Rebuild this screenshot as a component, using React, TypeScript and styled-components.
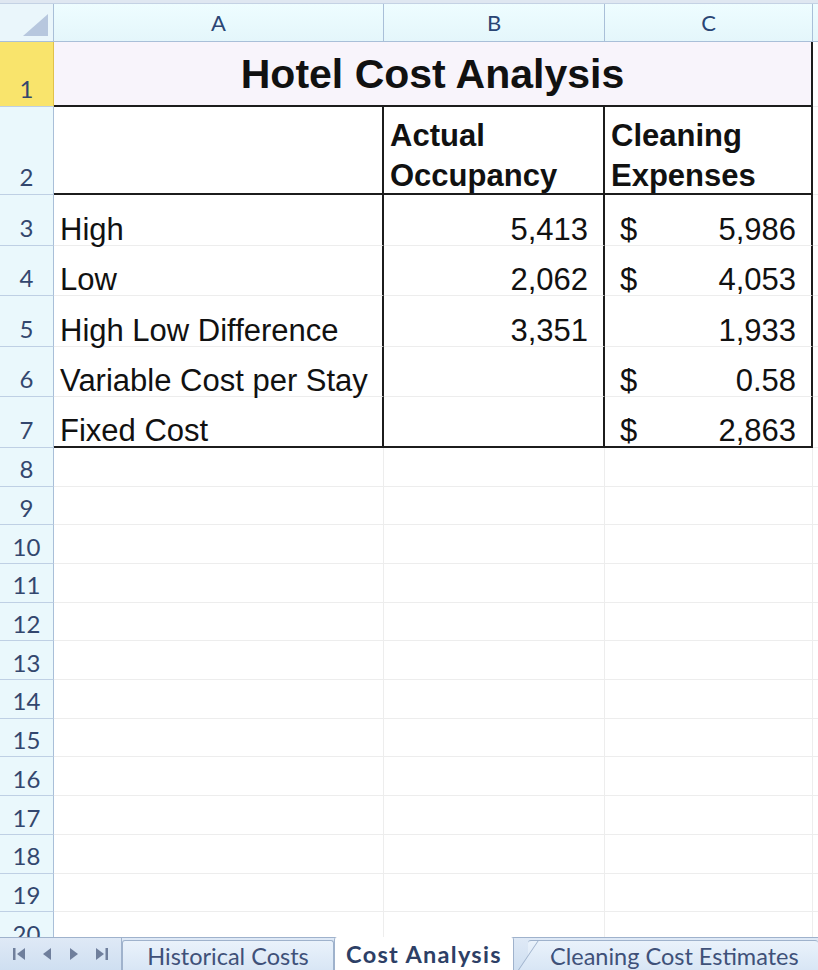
import React from "react";
import styled, { createGlobalStyle } from "styled-components";

const GlobalStyle = createGlobalStyle`
  html, body {
    margin: 0;
    padding: 0;
    background: #ffffff;
    overflow: hidden;
  }
`;

const rowsTop = [
  { n: 1, h: 65 },
  { n: 2, h: 88 },
  { n: 3, h: 50.6 },
  { n: 4, h: 50.6 },
  { n: 5, h: 50.6 },
  { n: 6, h: 50.6 },
  { n: 7, h: 50.6 },
];
const emptyRows = [8, 9, 10, 11, 12, 13, 14, 15, 16, 17, 18, 19, 20];

type Money = { sign?: boolean; value: string };
type DataRow = { n: number; label: string; occ: string; cost: Money | null };

const data: DataRow[] = [
  { n: 3, label: "High", occ: "5,413", cost: { sign: true, value: "5,986" } },
  { n: 4, label: "Low", occ: "2,062", cost: { sign: true, value: "4,053" } },
  { n: 5, label: "High Low Difference", occ: "3,351", cost: { value: "1,933" } },
  { n: 6, label: "Variable Cost per Stay", occ: "", cost: { sign: true, value: "0.58" } },
  { n: 7, label: "Fixed Cost", occ: "", cost: { sign: true, value: "2,863" } },
];

export default function App() {
  return (
    <Window>
      <GlobalStyle />
      <TopStrip />
      <SheetArea>
        <Grid>
          <Corner>
            <svg width="30" height="26" viewBox="0 0 30 26">
              <polygon points="28,2 28,24 3,24" fill="#b7c7de" />
            </svg>
          </Corner>
          <ColHead>A</ColHead>
          <ColHead>B</ColHead>
          <ColHead>C</ColHead>
          <ColHead />

          <RowHead $active>1</RowHead>
          <TitleCell $right $bottom>Hotel Cost Analysis</TitleCell>
          <Cell />

          <RowHead>2</RowHead>
          <Cell $right $bottom />
          <HeadCell $right $bottom>
            Actual
            <br />
            Occupancy
          </HeadCell>
          <HeadCell $right $bottom>
            Cleaning
            <br />
            Expenses
          </HeadCell>
          <Cell />

          {data.map((r) => (
            <React.Fragment key={r.n}>
              <RowHead>{r.n}</RowHead>
              <Cell $right $bottom={r.n === 7}>
                {r.label}
              </Cell>
              <Cell $right $bottom={r.n === 7} $align="flex-end">
                {r.occ}
              </Cell>
              <Cell $right $bottom={r.n === 7} $split>
                {r.cost && (
                  <>
                    <span>{r.cost.sign ? "$" : ""}</span>
                    <span>{r.cost.value}</span>
                  </>
                )}
              </Cell>
              <Cell />
            </React.Fragment>
          ))}

          {emptyRows.map((n) => (
            <React.Fragment key={n}>
              <RowHead $small>{n}</RowHead>
              <Cell />
              <Cell />
              <Cell />
              <Cell />
            </React.Fragment>
          ))}
        </Grid>
      </SheetArea>

      <TabBar>
        <NavGroup>
          <NavButton>
            <svg width="14" height="18" viewBox="0 0 14 18">
              <rect x="1" y="3" width="2.5" height="12" fill="#6f7f9c" />
              <polygon points="13,3 13,15 5,9" fill="#6f7f9c" />
            </svg>
          </NavButton>
          <NavButton>
            <svg width="12" height="18" viewBox="0 0 12 18">
              <polygon points="10,3 10,15 2,9" fill="#6f7f9c" />
            </svg>
          </NavButton>
          <NavButton>
            <svg width="12" height="18" viewBox="0 0 12 18">
              <polygon points="2,3 2,15 10,9" fill="#6f7f9c" />
            </svg>
          </NavButton>
          <NavButton>
            <svg width="14" height="18" viewBox="0 0 14 18">
              <polygon points="1,3 1,15 9,9" fill="#6f7f9c" />
              <rect x="10.5" y="3" width="2.5" height="12" fill="#6f7f9c" />
            </svg>
          </NavButton>
        </NavGroup>
        <Tab $w={212}>Historical Costs</Tab>
        <Tab $active $w={180}>
          Cost Analysis
        </Tab>
        <Tab $slant>Cleaning Cost Estimates</Tab>
      </TabBar>
    </Window>
  );
}

const Window = styled.div`
  width: 818px;
  height: 970px;
  display: flex;
  flex-direction: column;
  background: #ffffff;
  overflow: hidden;
`;

const TopStrip = styled.div`
  height: 4px;
  flex: none;
  background: #dfe7f1;
  border-bottom: 1px solid #c4d2e4;
  box-sizing: border-box;
`;

const SheetArea = styled.div`
  flex: 1;
  overflow: hidden;
`;

const Grid = styled.div`
  display: grid;
  grid-template-columns: 54px 330px 221px 208px 1fr;
  grid-template-rows: 38px ${rowsTop.map((r) => `${r.h}px`).join(" ")} repeat(
      ${emptyRows.length},
      38.7px
    );
`;

const headFont = `Lato, "Open Sans", sans-serif`;
const cellFont = `"Liberation Sans", Arial, sans-serif`;

const Corner = styled.div`
  background: #eaf6fb;
  border-right: 1px solid #a9bfd8;
  border-bottom: 1px solid #a9bfd8;
  display: flex;
  align-items: flex-end;
  justify-content: flex-end;
  padding: 0 3px 3px 0;
`;

const ColHead = styled.div`
  background: linear-gradient(#eefdff, #e4f6fb);
  border-right: 1px solid #a9bfd8;
  border-bottom: 1px solid #a9bfd8;
  display: flex;
  align-items: center;
  justify-content: center;
  font-family: ${headFont};
  font-size: 22px;
  color: #2a4574;
`;

const RowHead = styled.div<{ $active?: boolean; $small?: boolean }>`
  background: ${(p) => (p.$active ? "#f9e46c" : "#eaf8fc")};
  border-right: 1px solid ${(p) => (p.$active ? "#e1c14a" : "#a9bfd8")};
  border-bottom: 1px solid #bfd0e4;
  display: flex;
  align-items: ${(p) => (p.$small ? "center" : "flex-end")};
  justify-content: center;
  padding: ${(p) => (p.$small ? "4px 0 0" : "0 0 3px")};
  box-sizing: border-box;
  font-family: ${headFont};
  font-size: 24px;
  color: #33476e;
`;

const Cell = styled.div<{
  $right?: boolean;
  $bottom?: boolean;
  $align?: string;
  $split?: boolean;
}>`
  border-right: ${(p) => (p.$right ? "2px solid #1c1c1c" : "1px solid #ededed")};
  border-bottom: ${(p) => (p.$bottom ? "2px solid #1c1c1c" : "1px solid #ededed")};
  box-sizing: border-box;
  display: flex;
  align-items: flex-end;
  justify-content: ${(p) => (p.$split ? "space-between" : p.$align || "flex-start")};
  padding: 0 15px 0 ${(p) => (p.$split ? "15px" : "6px")};
  font-family: ${cellFont};
  font-size: 31px;
  line-height: 30px;
  color: #111111;
  white-space: nowrap;
`;

const TitleCell = styled(Cell)`
  grid-column: span 3;
  background: #f8f4fb;
  align-items: center;
  justify-content: center;
  font-size: 41px;
  font-weight: bold;
  line-height: 48px;
  padding: 0;
`;

const HeadCell = styled(Cell)`
  display: block;
  font-weight: bold;
  line-height: 40px;
  padding: 9px 6px 0;
`;

const TabBar = styled.div`
  height: 33px;
  flex: none;
  display: flex;
  align-items: stretch;
  background: linear-gradient(#dfe9f6, #cfdff1);
  border-top: 1px solid #9fb2cc;
  box-sizing: border-box;
`;

const NavGroup = styled.div`
  width: 122px;
  flex: none;
  display: flex;
  align-items: center;
  justify-content: space-around;
  padding: 0 4px;
  box-sizing: border-box;
  border-right: 1px solid #9fb2cc;
`;

const NavButton = styled.span`
  display: flex;
  align-items: center;
`;

const Tab = styled.div<{ $active?: boolean; $slant?: boolean; $w?: number }>`
  position: relative;
  flex: ${(p) => (p.$w ? `0 0 ${p.$w}px` : "1")};
  box-sizing: border-box;
  display: flex;
  align-items: center;
  justify-content: ${(p) => (p.$slant ? "flex-start" : "center")};
  margin-top: ${(p) => (p.$active ? "-1px" : "2px")};
  background: ${(p) => (p.$active ? "#ffffff" : "linear-gradient(#eaf2fb, #d8e6f5)")};
  border-left: ${(p) => (p.$slant ? "none" : "1px solid #9fb2cc")};
  border-right: ${(p) => (p.$slant ? "none" : "1px solid #9fb2cc")};
  border-top: ${(p) => (p.$active ? "none" : "1px solid #9fb2cc")};
  border-radius: 3px 3px 0 0;
  font-family: ${headFont};
  font-size: 23.5px;
  letter-spacing: ${(p) => (p.$active ? "1.3px" : "0")};
  font-weight: ${(p) => (p.$active ? "bold" : "normal")};
  color: ${(p) => (p.$active ? "#2d3f66" : "#3f5179")};
  white-space: nowrap;
  ${(p) =>
    p.$slant &&
    `
    margin-left: 14px;
    padding-left: 22px;
    &::before {
      content: "";
      position: absolute;
      left: -10px;
      top: -1px;
      bottom: 0;
      width: 22px;
      background: linear-gradient(#eaf2fb, #d8e6f5);
      border-left: 1px solid #9fb2cc;
      border-top: 1px solid #9fb2cc;
      transform: skewX(-34deg);
      transform-origin: bottom left;
    }
  `}
`;
